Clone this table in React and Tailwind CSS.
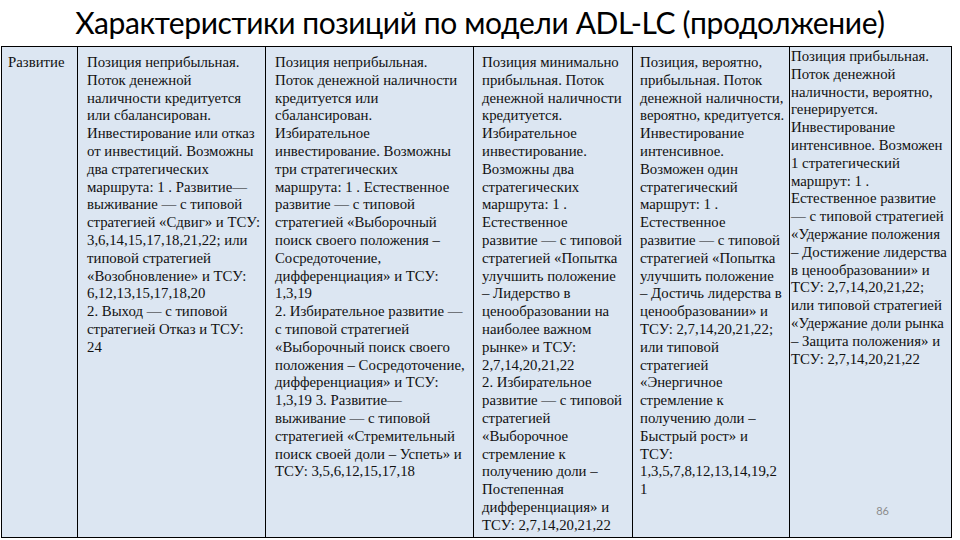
import React from "react";

const cols = [
  {
    w: "w-[76px]",
    pad: "pl-[6px] pt-[7px]",
    lines: ["Развитие"],
  },
  {
    w: "w-[188px]",
    pad: "pl-[9px] pt-[7px]",
    lines: [
      "Позиция неприбыльная.",
      "Поток денежной",
      "наличности кредитуется",
      "или сбалансирован.",
      "Инвестирование или отказ",
      "от инвестиций. Возможны",
      "два стратегических",
      "маршрута: 1 . Развитие—",
      "выживание — с типовой",
      "стратегией «Сдвиг» и ТСУ:",
      "3,6,14,15,17,18,21,22; или",
      "типовой стратегией",
      "«Возобновление» и ТСУ:",
      "6,12,13,15,17,18,20",
      "2. Выход — с типовой",
      "стратегией Отказ и ТСУ:",
      "24",
    ],
  },
  {
    w: "w-[208px]",
    pad: "pl-[9px] pt-[7px]",
    lines: [
      "Позиция неприбыльная.",
      "Поток денежной наличности",
      "кредитуется или",
      "сбалансирован.",
      "Избирательное",
      "инвестирование. Возможны",
      "три стратегических",
      "маршрута: 1 . Естественное",
      "развитие — с типовой",
      "стратегией «Выборочный",
      "поиск своего положения –",
      "Сосредоточение,",
      "дифференциация» и ТСУ:",
      "1,3,19",
      "2. Избирательное развитие —",
      "с типовой стратегией",
      "«Выборочный поиск своего",
      "положения – Сосредоточение,",
      "дифференциация» и ТСУ:",
      "1,3,19 3. Развитие—",
      "выживание — с типовой",
      "стратегией «Стремительный",
      "поиск своей доли – Успеть» и",
      "ТСУ: 3,5,6,12,15,17,18",
    ],
  },
  {
    w: "w-[159px]",
    pad: "pl-[8px] pt-[7px]",
    lines: [
      "Позиция минимально",
      "прибыльная. Поток",
      "денежной наличности",
      "кредитуется.",
      "Избирательное",
      "инвестирование.",
      "Возможны два",
      "стратегических",
      "маршрута: 1 .",
      "Естественное",
      "развитие — с типовой",
      "стратегией «Попытка",
      "улучшить положение",
      "– Лидерство в",
      "ценообразовании на",
      "наиболее важном",
      "рынке» и ТСУ:",
      "2,7,14,20,21,22",
      "2. Избирательное",
      "развитие — с типовой",
      "стратегией",
      "«Выборочное",
      "стремление к",
      "получению доли –",
      "Постепенная",
      "дифференциация» и",
      "ТСУ: 2,7,14,20,21,22",
    ],
  },
  {
    w: "w-[157px]",
    pad: "pl-[7px] pt-[7px]",
    lines: [
      "Позиция, вероятно,",
      "прибыльная. Поток",
      "денежной наличности,",
      "вероятно, кредитуется.",
      "Инвестирование",
      "интенсивное.",
      "Возможен один",
      "стратегический",
      "маршрут: 1 .",
      "Естественное",
      "развитие — с типовой",
      "стратегией «Попытка",
      "улучшить положение",
      "– Достичь лидерства в",
      "ценообразовании» и",
      "ТСУ: 2,7,14,20,21,22;",
      "или типовой",
      "стратегией",
      "«Энергичное",
      "стремление к",
      "получению доли –",
      "Быстрый рост» и",
      "ТСУ:",
      "1,3,5,7,8,12,13,14,19,2",
      "1",
    ],
  },
  {
    w: "w-[162px]",
    pad: "pl-[1px] pt-[1px]",
    lines: [
      "Позиция прибыльная.",
      "Поток денежной",
      "наличности, вероятно,",
      "генерируется.",
      "Инвестирование",
      "интенсивное. Возможен",
      "1 стратегический",
      "маршрут: 1 .",
      "Естественное развитие",
      "— с типовой стратегией",
      "«Удержание положения",
      "– Достижение лидерства",
      "в ценообразовании» и",
      "ТСУ: 2,7,14,20,21,22;",
      "или типовой стратегией",
      "«Удержание доли рынка",
      "– Защита положения» и",
      "ТСУ: 2,7,14,20,21,22",
    ],
  },
];

export default function App() {
  return (
    <div className="w-[960px] h-[540px] bg-white overflow-hidden flex flex-col">
      {/* Title */}
      <div className="h-[46px] flex items-center justify-center">
        <h1 className="font-['Lato',sans-serif] text-[30px] leading-none tracking-[-0.4px] text-black mt-[-2px]">
          Характеристики позиций по модели ADL-LC (продолжение)
        </h1>
      </div>

      {/* Table */}
      <div className="ml-[1px] w-[951px] h-[492px] flex border border-black bg-[#dce6f2]">
        {cols.map((c, i) => (
          <div
            key={i}
            className={`${c.w} ${c.pad} relative shrink-0 h-full ${i < cols.length - 1 ? "border-r border-black" : ""} font-['Liberation_Serif',serif] text-[14.8px] leading-[17.8px] text-[#111]`}
          >
            {c.lines.map((l, j) => (
              <div key={j} className="whitespace-nowrap">
                {l}
              </div>
            ))}
            {i === cols.length - 1 && (
              <span className="absolute right-[63px] bottom-[17px] font-['Lato',sans-serif] text-[11px] text-[#8c8c8c]">
                86
              </span>
            )}
          </div>
        ))}
      </div>
    </div>
  );
}
